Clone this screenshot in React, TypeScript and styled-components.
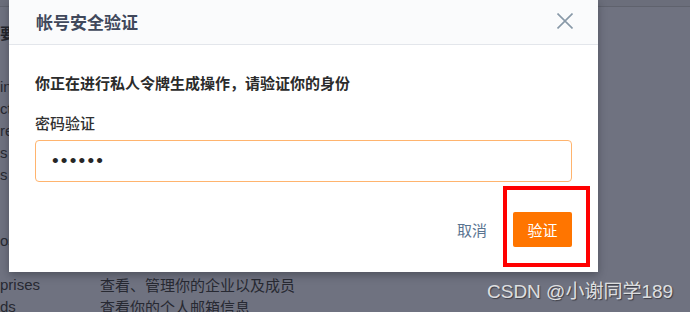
import React from "react";
import styled, { createGlobalStyle } from "styled-components";

const GlobalStyle = createGlobalStyle`
  html, body { margin: 0; padding: 0; }
  body {
    width: 690px;
    height: 312px;
    overflow: hidden;
    background: #6f7280;
    font-family: "Liberation Sans", "Noto Sans CJK SC", sans-serif;
  }
`;

const Page = styled.div`
  position: relative;
  width: 690px;
  height: 312px;
  overflow: hidden;
  background: #6f7280;
`;

const TopBar = styled.div`
  height: 6px;
  background: #6b6e7b;
  border-bottom: 1px solid #5f626d;
`;

const Heading = styled.div`
  margin-top: 16px;
  height: 20px;
  line-height: 20px;
  font-size: 15px;
  font-weight: 700;
  color: #22242c;
  font-family: "Noto Sans CJK SC", sans-serif;
`;

const ScopeList = styled.div`
  margin-top: 32px;
  display: grid;
  grid-template-columns: 100px 1fr;
  grid-auto-rows: 22px;
  align-items: center;
  font-size: 15px;
  color: #272932;
  font-family: "Liberation Sans", "Noto Sans CJK SC", sans-serif;
`;

const ScopeName = styled.div`
  white-space: nowrap;
`;

const ScopeDesc = styled.div`
  white-space: nowrap;
  font-family: "Noto Sans CJK SC", sans-serif;
  font-size: 15px;
`;

const Modal = styled.div`
  position: absolute;
  top: 0;
  left: 9px;
  width: 589px;
  background: #ffffff;
  box-shadow: 0 3px 8px rgba(20, 22, 30, 0.35);
  font-family: "Noto Sans CJK SC", sans-serif;
`;

const Header = styled.div`
  height: 44px;
  display: flex;
  align-items: center;
  justify-content: space-between;
  padding: 0 25px 0 27px;
  background: #fafbfc;
  border-bottom: 1px solid #e3e6eb;
`;

const Title = styled.div`
  font-size: 17px;
  font-weight: 700;
  color: #40485b;
  line-height: 22px;
`;

const CloseButton = styled.button`
  display: flex;
  align-items: center;
  justify-content: center;
  width: 16px;
  height: 16px;
  padding: 0;
  margin-top: -2px;
  border: none;
  background: none;
  cursor: pointer;
`;

const Body = styled.div`
  padding: 28px 26px 0;
`;

const Statement = styled.div`
  font-size: 15px;
  line-height: 20px;
  font-weight: 700;
  color: #2b2b2b;
`;

const Label = styled.div`
  margin-top: 20px;
  font-size: 15px;
  line-height: 20px;
  font-weight: 500;
  color: #303030;
`;

const PasswordInput = styled.input`
  display: block;
  box-sizing: border-box;
  width: 100%;
  height: 42px;
  margin-top: 7px;
  padding: 0 0 0 16px;
  border: 1px solid #ffb46e;
  border-radius: 4px;
  outline: none;
  font-family: "Liberation Sans", sans-serif;
  font-size: 19px;
  letter-spacing: 2.2px;
  color: #262626;
  background: #fff;
`;

const Footer = styled.div`
  display: flex;
  justify-content: flex-end;
  align-items: center;
  gap: 26px;
  padding: 30px 26px 25px;
`;

const CancelButton = styled.button`
  border: none;
  background: none;
  padding: 0;
  font-family: "Noto Sans CJK SC", sans-serif;
  font-size: 15px;
  color: #5a7491;
  cursor: pointer;
`;

const ConfirmButton = styled.button`
  width: 59px;
  height: 35px;
  border: none;
  border-radius: 2px;
  background: #ff7500;
  color: #ffffff;
  font-family: "Noto Sans CJK SC", sans-serif;
  font-size: 15px;
  cursor: pointer;
`;

const Annotation = styled.div`
  position: absolute;
  left: 503px;
  top: 186px;
  width: 87px;
  height: 81px;
  box-sizing: border-box;
  border: 4px solid #ff0000;
  pointer-events: none;
`;

const Watermark = styled.div`
  position: absolute;
  left: 487px;
  top: 281px;
  font-family: "Liberation Sans", "Noto Sans CJK SC", sans-serif;
  font-size: 19px;
  line-height: 22px;
  color: rgba(240, 240, 240, 0.9);
  text-shadow: 1px 1px 1px rgba(0, 0, 0, 0.45);
  white-space: nowrap;
`;

const scopes: { name: string; desc: string }[] = [
  { name: "inf", desc: "" },
  { name: "ct", desc: "" },
  { name: "re", desc: "" },
  { name: "s", desc: "" },
  { name: "s", desc: "" },
  { name: "", desc: "" },
  { name: "", desc: "" },
  { name: "os", desc: "" },
  { name: "", desc: "" },
  { name: "prises", desc: "查看、管理你的企业以及成员" },
  { name: "ds", desc: "查看你的个人邮箱信息" },
];

const CloseIcon = () => (
  <svg width="16" height="16" viewBox="0 0 16 16">
    <path d="M0.5 0.5 L15.5 15.5 M15.5 0.5 L0.5 15.5" stroke="#8899a8" strokeWidth="1.6" fill="none" />
  </svg>
);

export default function App() {
  return (
    <>
      <GlobalStyle />
      <Page>
        <TopBar />
        <Heading>要</Heading>
        <ScopeList>
          {scopes.map((s, i) => (
            <React.Fragment key={i}>
              <ScopeName>{s.name}</ScopeName>
              <ScopeDesc>{s.desc}</ScopeDesc>
            </React.Fragment>
          ))}
        </ScopeList>

        <Modal>
          <Header>
            <Title>帐号安全验证</Title>
            <CloseButton aria-label="关闭">
              <CloseIcon />
            </CloseButton>
          </Header>
          <Body>
            <Statement>你正在进行私人令牌生成操作，请验证你的身份</Statement>
            <Label>密码验证</Label>
            <PasswordInput type="password" defaultValue="123456" readOnly />
          </Body>
          <Footer>
            <CancelButton>取消</CancelButton>
            <ConfirmButton>验证</ConfirmButton>
          </Footer>
        </Modal>

        <Annotation />
        <Watermark>CSDN @小谢同学189</Watermark>
      </Page>
    </>
  );
}
